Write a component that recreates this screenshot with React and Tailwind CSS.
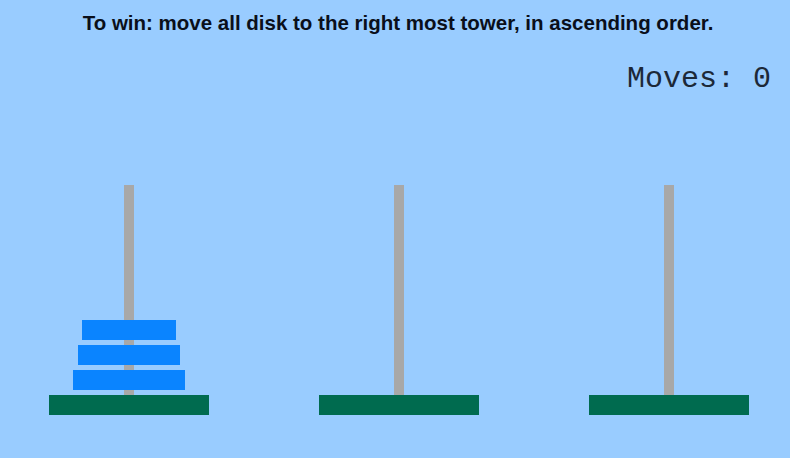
const towers = [
  [94, 102, 112],
  [],
  [],
];

function Tower({ disks }) {
  return (
    <div className="flex w-[160px] flex-col items-center">
      <div className="relative flex h-[210px] w-[160px] justify-center">
        <div className="h-full w-[10px] bg-[#a8a8a8]" />
        <div className="absolute inset-x-0 bottom-[5px] flex flex-col items-center gap-[5px]">
          {disks.map((w) => (
            <div key={w} className="h-[20px] bg-[#0a84ff]" style={{ width: w }} />
          ))}
        </div>
      </div>
      <div className="h-[20px] w-[160px] bg-[#006b4f]" />
    </div>
  );
}

export default function App() {
  return (
    <div className="h-[458px] w-full overflow-hidden bg-[#99ccff]">
      <h1
        className="pl-[6px] pt-[11px] text-center text-[20.5px] font-bold leading-[24px] text-[#0a0f1a]"
        style={{ fontFamily: '"Liberation Sans", Arial, sans-serif' }}
      >
        To win: move all disk to the right most tower, in ascending order.
      </h1>
      <div
        className="mt-[27px] pr-[19px] text-right text-[30px] leading-[34px] text-[#1c2838]"
        style={{ fontFamily: '"Liberation Mono", "Courier New", monospace' }}
      >
        Moves: 0
      </div>
      <div className="mt-[89px] flex gap-[110px] pl-[49px]">
        {towers.map((d, i) => (
          <Tower key={i} disks={d} />
        ))}
      </div>
    </div>
  );
}
